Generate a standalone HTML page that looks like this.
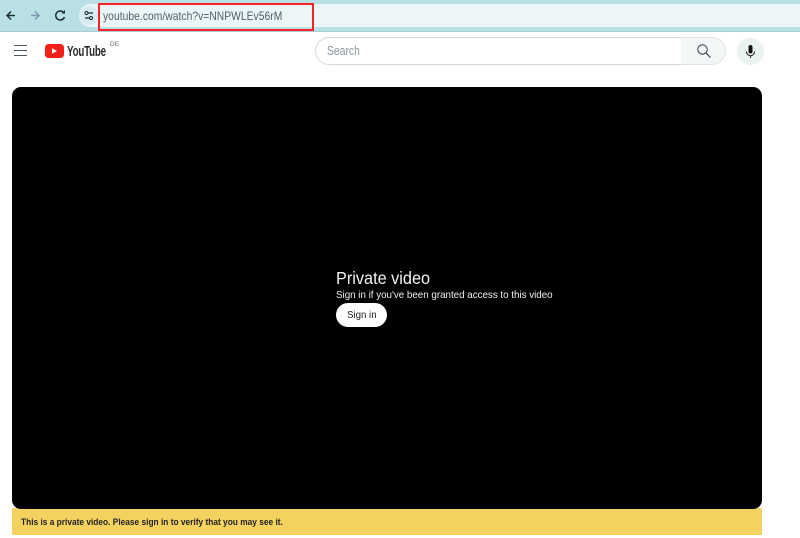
<!DOCTYPE html>
<html><head><meta charset="utf-8"><style>
html,body{margin:0;padding:0;width:800px;height:538px;overflow:hidden;background:#fff;font-family:"Liberation Sans",sans-serif}
.a{position:absolute;white-space:nowrap}
.s{transform-origin:0 0}
svg{position:absolute;overflow:visible}
</style></head><body>
<div class="a" style="left:0;top:0;width:800px;height:31px;background:#b9e1e5;border-bottom:1px solid #a9cdd2"></div>
<div class="a" style="left:79px;top:4px;width:721px;height:23px;background:#ecf6f8;border-radius:12px 0 0 12px"></div>
<svg style="left:0;top:0" width="110" height="31" fill="none">
<path d="M15 15.500H7M11 11.500L7 15.500L11 19.500" stroke="#1f2a2e" stroke-width="1.500"/>
<path d="M31 15.500H39M35 11.500L39 15.500L35 19.500" stroke="#7d98b0" stroke-width="1.500"/>
<path d="M64 13A4.500 4.500 0 1 0 64.500 17" stroke="#1f2a2e" stroke-width="1.500"/>
<path d="M61.500 13.500H65V10Z" fill="#1f2a2e"/>
<circle cx="89" cy="15.500" r="9.500" fill="#d5ebef"/>
<path d="M85 13H93M85 18H93" stroke="#1f2a2e" stroke-width="1.300"/>
<circle cx="86.500" cy="13" r="1.500" fill="#d5ebef" stroke="#1f2a2e"/>
<circle cx="91" cy="18" r="1.500" fill="#d5ebef" stroke="#1f2a2e"/>
</svg>
<div class="a s" style="left:103px;top:8.500px;font-size:12px;line-height:14px;color:#4d6064;letter-spacing:.08px;transform:scaleX(.853)">youtube.com/watch?v=NNPWLEv56rM</div>
<div class="a" style="left:98px;top:3px;width:212px;height:24px;border:2px solid #f3252b"></div>

<svg style="left:0;top:36px" width="130" height="30" fill="none">
<path d="M14 9.500H27M14 14.500H27M14 19.500H27" stroke="#4a5a60" stroke-width="1"/>
<rect x="45" y="8" width="19" height="14" rx="3.500" fill="#f1211a"/>
<path d="M52 12.300L57 15L52 17.700Z" fill="#fff"/>
</svg>
<div class="a s" style="left:67px;top:43px;font-size:15px;line-height:17px;font-weight:bold;color:#2a2a2a;transform:scaleX(.65);letter-spacing:-.3px">YouTube</div>
<div class="a" style="left:110px;top:41px;font-size:6.500px;line-height:8px;color:#606b70">DE</div>

<div class="a" style="left:315px;top:37px;width:366px;height:26px;border:1px solid #d6d9d9;border-right:0;border-radius:14px 0 0 14px;background:#fff"></div>
<div class="a" style="left:681px;top:37px;width:44px;height:26px;border:1px solid #dfe3e3;border-left:0;border-radius:0 14px 14px 0;background:#f3f7f7"></div>
<div class="a s" style="left:327px;top:44px;font-size:12.500px;line-height:14px;color:#8b979a;transform:scaleX(.83)">Search</div>
<svg style="left:696px;top:43px" width="16" height="16" fill="none">
<circle cx="6.500" cy="6.500" r="4.700" stroke="#2d3538" stroke-width="1"/>
<path d="M10 10L14.500 14.500" stroke="#2d3538" stroke-width="1.100"/>
</svg>
<div class="a" style="left:737px;top:38px;width:27px;height:27px;border-radius:50%;background:#eaf2f2"></div>
<svg style="left:744px;top:44px" width="14" height="17" fill="none">
<rect x="4.500" y="1" width="4" height="8.500" rx="2" fill="#111"/>
<path d="M2.500 7.500C2.500 13 10.500 13 10.500 7.500M6.500 11.500V14" stroke="#2a2a2a" stroke-width="1.100"/>
</svg>

<div class="a" style="left:12px;top:508px;width:750px;height:27px;background:#f4d25f"></div>
<div class="a" style="left:12px;top:87px;width:750px;height:422px;background:#000;border-radius:9px"></div>
<div class="a s" style="left:336px;top:268px;font-size:17.500px;line-height:20px;color:#f3f3f3;transform:scaleX(.93)">Private video</div>
<div class="a s" style="left:336px;top:289px;font-size:10.200px;line-height:13px;color:#f0f0f0;transform:scaleX(.96)">Sign in if you've been granted access to this video</div>
<div class="a" style="left:336px;top:303px;width:51px;height:24px;border-radius:12px;background:#fff"></div>
<div class="a s" style="left:347px;top:309px;font-size:10.200px;line-height:13px;color:#1c1c1c;transform:scaleX(.95)">Sign in</div>
<div class="a s" style="left:21px;top:516px;font-size:9.300px;line-height:12px;font-weight:bold;color:#222;transform:scaleX(.897)">This is a private video. Please sign in to verify that you may see it.</div>
</body></html>
